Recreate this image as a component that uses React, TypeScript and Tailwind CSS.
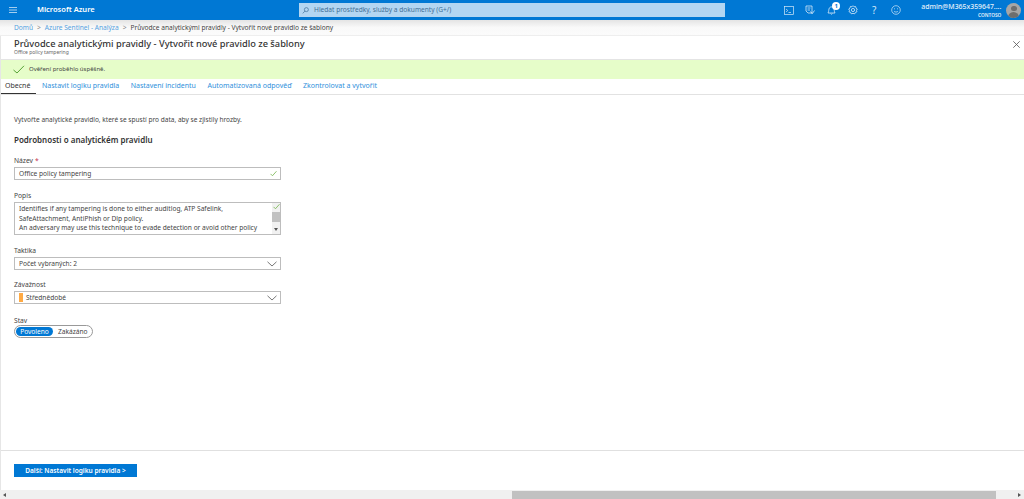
import React from "react";

const Chevron = () => (
  <svg width="10" height="6" viewBox="0 0 10 6" className="shrink-0" fill="none" stroke="#555" strokeWidth="0.8">
    <path d="M0.5 0.8 L5 5 L9.5 0.8" />
  </svg>
);

const Check = ({ size = 7 }: { size?: number }) => (
  <svg width={size} height={size} viewBox="0 0 8 8" fill="none" stroke="#7fba5a" strokeWidth="1">
    <path d="M0.6 4.4 L2.8 6.6 L7.4 1.4" />
  </svg>
);

const Label = ({ children }: { children: React.ReactNode }) => (
  <div className="h-[7px] flex items-center text-[6.7px] text-[#444]">{children}</div>
);

const HeaderIcon = ({ children, className = "" }: { children: React.ReactNode; className?: string }) => (
  <div className={`w-[21.4px] h-[20px] flex items-center justify-center ${className}`}>{children}</div>
);

const TABS = ["Nastavit logiku pravidla", "Nastavení incidentu", "Automatizovaná odpověď", "Zkontrolovat a vytvořit"];

export default function App() {
  return (
    <div className="w-[1024px] h-[499px] overflow-hidden flex flex-col bg-white text-[#333] font-['Noto_Sans','Open_Sans',sans-serif]">
      {/* top bar */}
      <header className="h-[20px] shrink-0 bg-[#0078d4] flex items-center text-white">
        <div className="w-[26px] pl-[9px]">
          <svg width="8" height="6" viewBox="0 0 8 6" stroke="#cfe4f6" strokeWidth="0.8">
            <path d="M0 0.5H8M0 3H8M0 5.5H8" />
          </svg>
        </div>
        <div className="ml-[11px] w-[262px] text-[7.5px] font-semibold">Microsoft Azure</div>
        <div className="w-[426px] h-[14px] bg-[#b3d6f2] flex items-center pl-[3px] gap-[5px] text-[6.6px] text-[#3f6f96]">
          <svg width="7" height="7" viewBox="0 0 8 8" fill="none" stroke="#3f6f96" strokeWidth="0.8">
            <circle cx="5" cy="3" r="2.3" />
            <path d="M3.4 4.7 L0.8 7.3" />
          </svg>
          Hledat prostředky, služby a dokumenty (G+/)
        </div>
        <div className="ml-[53px] flex items-center">
          <HeaderIcon>
            <svg width="10" height="9" viewBox="0 0 10 9" fill="none" stroke="#d5e8f8" strokeWidth="0.7">
              <rect x="0.5" y="0.5" width="9" height="8" />
              <path d="M2 3 L3.8 4.5 L2 6 M4.5 6.5H7" />
            </svg>
          </HeaderIcon>
          <HeaderIcon>
            <svg width="10" height="10" viewBox="0 0 10 10" fill="none" stroke="#d5e8f8" strokeWidth="0.8">
              <path d="M1 1H7V8H3L1 6Z M2.5 3H5.5 M2.5 5H5" />
              <path d="M5.5 6.5L7.2 8.8L9.5 5.5" />
            </svg>
          </HeaderIcon>
          <HeaderIcon className="relative">
            <svg width="9" height="10" viewBox="0 0 9 10" fill="none" stroke="#d5e8f8" strokeWidth="0.8">
              <path d="M1 8C2 6.5 1.5 4 2.5 2.8C3.5 1.6 5.5 1.6 6.5 2.8C7.5 4 7 6.5 8 8Z M3.5 8.6C4 9.4 5 9.4 5.5 8.6" />
            </svg>
            <span className="absolute left-[11.5px] top-[2px] w-[8px] h-[8px] rounded-full bg-white text-[#0078d4] text-[6px] leading-[8px] text-center font-bold">1</span>
          </HeaderIcon>
          <HeaderIcon>
            <svg width="10" height="10" viewBox="0 0 10 10" fill="none" stroke="#d5e8f8" strokeWidth="0.8">
              <path d="M5 0.7L6 1.8L7.6 1.5L8 3.1L9.3 4L8.5 5.3L9 6.8L7.5 7.3L6.8 8.8L5 8.4L3.2 8.8L2.5 7.3L1 6.8L1.5 5.3L0.7 4L2 3.1L2.4 1.5L4 1.8Z" />
              <circle cx="5" cy="5" r="1.6" />
            </svg>
          </HeaderIcon>
          <HeaderIcon><span className="text-[10px] leading-none text-[#d5e8f8]">?</span></HeaderIcon>
          <HeaderIcon>
            <svg width="10" height="10" viewBox="0 0 10 10" fill="none" stroke="#d5e8f8" strokeWidth="0.7">
              <circle cx="5" cy="5" r="4.3" />
              <path d="M3 3.8H4M6 3.8H7M3 6.3C4 7.3 6 7.3 7 6.3" />
            </svg>
          </HeaderIcon>
        </div>
        <div className="ml-[14px] w-[81px] flex flex-col items-end leading-none mt-[2px]">
          <span className="text-[6.9px] text-[#e4f0fa] font-medium">admin@M365x359647....</span>
          <span className="mt-[2px] text-[4.8px] font-semibold text-[#e4f0fa]">CONTOSO</span>
        </div>
        <div className="ml-[5px] w-[15px] h-[15px] rounded-full bg-[#a6a6a6] overflow-hidden flex flex-col items-center">
          <div className="mt-[3px] w-[6px] h-[6px] rounded-full bg-[#6e6e6e]" />
          <div className="mt-[1px] w-[11px] h-[6px] rounded-t-full bg-[#6e6e6e]" />
        </div>
      </header>

      {/* breadcrumb */}
      <nav className="h-[15px] shrink-0 bg-gradient-to-b from-[#e4e4e4] via-[#f9f9f9] to-[#fbfbfb] flex items-center pl-[14px] text-[6.6px]">
        <span className="text-[#0078d4]/70">Domů</span>
        <span className="mx-[4px] text-[#888]">&gt;</span>
        <span className="text-[#0078d4]/70">Azure Sentinel - Analýza</span>
        <span className="mx-[4px] text-[#888]">&gt;</span>
        <span className="text-[#444]">Průvodce analytickými pravidly - Vytvořit nové pravidlo ze šablony</span>
      </nav>
      <div className="h-px shrink-0 bg-[#eeeeee]" />

      {/* panel */}
      <main className="flex-1 min-h-0 flex flex-col border-l border-[#e6e6e6]">
        <div className="h-[23px] shrink-0 flex justify-between pl-[13px] pr-[4px]">
          <div className="pt-[3px]">
            <div className="h-[10px] flex items-center text-[9.25px] font-medium text-[#333]">Průvodce analytickými pravidly - Vytvořit nové pravidlo ze šablony</div>
            <div className="mt-[1px] h-[6px] flex items-center text-[5px] text-[#666]">Office policy tampering</div>
          </div>
          <svg width="7" height="7" viewBox="0 0 7 7" stroke="#555" strokeWidth="0.8" className="mt-[5px]">
            <path d="M0.3 0.3L6.7 6.7M6.7 0.3L0.3 6.7" />
          </svg>
        </div>

        <div className="h-[20px] shrink-0 bg-[#e6fdc9] border-t border-[#e4e4e4] flex items-center pl-[13px] gap-[4px] text-[6px] text-[#444]">
          <svg width="12" height="9" viewBox="0 0 12 9" fill="none" stroke="#58a338" strokeWidth="1" className="-ml-[1px]">
            <path d="M0.5 5L4 8L11 0.8" />
          </svg>
          Ověření proběhlo úspěšně.
        </div>

        <div className="h-[16px] shrink-0 flex border-b border-[#e2e2e2] text-[7px]">
          <div className="w-[35px] pl-[4px] border-b-[1.5px] border-[#333] text-[#333] flex items-center h-[15px]">Obecné</div>
          <div className="flex gap-[11.5px] pl-[6px] text-[#2f8fdb]">
            {TABS.map((t) => (
              <div key={t} className="h-[15px] flex items-center">{t}</div>
            ))}
          </div>
        </div>

        <div className="flex-1 min-h-0 pl-[13px] text-[#444]">
          <div className="mt-[21px] h-[7px] flex items-center text-[6.55px]">Vytvořte analytické pravidlo, které se spustí pro data, aby se zjistily hrozby.</div>
          <div className="mt-[12px] h-[10px] flex items-center text-[8px] font-semibold text-[#333]">Podrobnosti o analytickém pravidlu</div>

          <div className="mt-[13px] w-[267px]">
            <Label>Název <span className="text-[#c4314b] ml-[2px]">*</span></Label>
            <div className="mt-[2px] h-[13px] border border-[#bdbdbd] flex items-center justify-between pl-[4px] pr-[3px] text-[6.6px]">
              Office policy tampering
              <Check />
            </div>
          </div>

          <div className="mt-[13px] w-[267px]">
            <Label>Popis</Label>
            <div className="mt-[2px] h-[33px] border border-[#bdbdbd] flex justify-between pl-[4px] text-[6.6px] leading-[9.6px] overflow-hidden">
              <div className="pt-[1px] whitespace-nowrap">
                <div>Identifies if any tampering is done to either auditlog, ATP Safelink,</div>
                <div>SafeAttachment, AntiPhish or Dlp policy.</div>
                <div>An adversary may use this technique to evade detection or avoid other policy</div>
              </div>
              <div className="relative w-[8px] shrink-0 bg-[#f1f1f1] flex flex-col items-center">
                <div className="absolute top-[0px]"><Check /></div>
                <div className="mt-[9px] w-[8px] h-[10px] bg-[#c1c1c1]" />
                <svg width="4" height="3" viewBox="0 0 4 3" fill="#555" className="absolute bottom-[3px]">
                  <path d="M0 0H4L2 3Z" />
                </svg>
              </div>
            </div>
          </div>

          <div className="mt-[13px] w-[267px]">
            <Label>Taktika</Label>
            <div className="mt-[2px] h-[13px] border border-[#bdbdbd] flex items-center justify-between pl-[4px] pr-[3px] text-[6.6px]">
              Počet vybraných: 2
              <Chevron />
            </div>
          </div>

          <div className="mt-[12px] w-[267px]">
            <Label>Závažnost</Label>
            <div className="mt-[2px] h-[13px] border border-[#bdbdbd] flex items-center justify-between pl-[4px] pr-[3px] text-[6.6px]">
              <div className="flex items-center gap-[3px]">
                <span className="w-[4px] h-[9px] bg-[#ffaa44]" />
                Střednědobé
              </div>
              <Chevron />
            </div>
          </div>

          <div className="mt-[14px]">
            <Label>Stav</Label>
            <div className="mt-[0px] w-[79px] h-[13px] rounded-full border border-[#999] flex items-center pl-[1px] text-[6.6px]">
              <span className="w-[37px] h-[9px] rounded-full bg-[#0078d4] text-white flex items-center justify-center">Povoleno</span>
              <span className="ml-[5px]">Zakázáno</span>
            </div>
          </div>
        </div>

        {/* footer */}
        <footer className="h-[40px] shrink-0 border-t border-[#e0e0e0] pl-[13px] pt-[13px]">
          <button className="w-[123px] h-[13px] bg-[#0078d4] text-white text-[6.55px] font-semibold flex items-center justify-center">Další: Nastavit logiku pravidla &gt;</button>
        </footer>
      </main>

      {/* horizontal scrollbar */}
      <div className="h-[9px] shrink-0 bg-[#f0f0f0] flex items-center">
        <svg width="3" height="4" viewBox="0 0 3 4" fill="#555" className="ml-[3px]"><path d="M3 0V4L0 2Z" /></svg>
        <div className="ml-[506px] w-[484px] h-[8px] bg-[#c1c1c1]" />
        <svg width="3" height="4" viewBox="0 0 3 4" fill="#555" className="ml-[22px]"><path d="M0 0V4L3 2Z" /></svg>
      </div>
    </div>
  );
}
